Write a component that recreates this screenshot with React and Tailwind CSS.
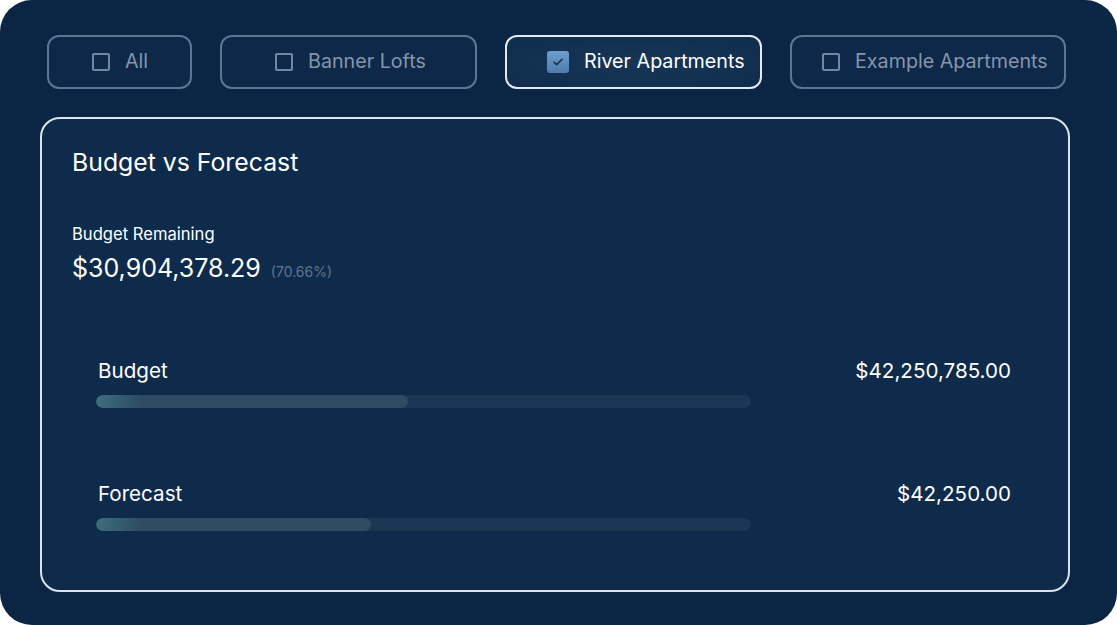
import { useState } from 'react';

const FILTERS = [
  { k: 'all', label: 'All', w: 'w-[145px]', pl: 'pl-[43px]' },
  { k: 'banner', label: 'Banner Lofts', w: 'w-[257px]', pl: 'pl-[53px]' },
  { k: 'river', label: 'River Apartments', w: 'w-[257px]', pl: 'pl-[40px]' },
  { k: 'example', label: 'Example Apartments', w: 'w-[276px]', pl: 'pl-[30px]' },
];

function Check({ on }) {
  if (on) {
    return (
      <span className="flex h-[22px] w-[22px] items-center justify-center rounded-[3px] bg-gradient-to-b from-[#6d9fcf] to-[#4d7dab]">
        <svg width="12" height="10" viewBox="0 0 12 10" fill="none">
          <path d="M2 5.2 4.6 7.6 10 2.4" stroke="#1b3553" strokeWidth="1.6" strokeLinecap="round" strokeLinejoin="round" />
        </svg>
      </span>
    );
  }
  return <span className="h-[18px] w-[18px] rounded-[2px] border-2 border-[#7587a0]" />;
}

function Bar({ pct }) {
  return (
    <div className="h-[13px] w-[655px] rounded-full bg-[#1c3754] overflow-hidden">
      <div
        className="h-full rounded-full bg-[linear-gradient(90deg,#3d6e7e_0px,#2f4b63_45px,#2f4b63_100%)]"
        style={{ width: `${pct}%` }}
      />
    </div>
  );
}

function Row({ label, value, pct }) {
  return (
    <div>
      <div className="flex items-start justify-between">
        <span className="text-[20.6px] leading-[28px] text-white pl-[2px]">{label}</span>
        <span className="text-[20.6px] leading-[28px] text-white">{value}</span>
      </div>
      <div className="mt-[10px]">
        <Bar pct={pct} />
      </div>
    </div>
  );
}

export default function App() {
  const [sel, setSel] = useState('river');
  return (
    <div className="bg-white h-[625px] w-[1117px]" style={{ fontFamily: 'Inter, "Noto Sans", sans-serif' }}>
      <div className="h-full w-full rounded-[32px] bg-[#0b2545] pt-[35px] px-[40px]">
        <div className="flex gap-[28px] pl-[7px]">
          {FILTERS.map((f) => {
            const on = sel === f.k;
            return (
              <button
                key={f.k}
                onClick={() => setSel(f.k)}
                className={`flex h-[54px] items-center gap-[15px] rounded-[12px] border-2 ${f.w} ${f.pl} ${
                  on
                    ? 'border-[#e4e9ef] bg-[radial-gradient(ellipse_at_center,#173657_0%,#0f2c4c_100%)] text-white'
                    : 'border-[#5f7590] bg-[#0d2848] text-[#8596ac]'
                }`}
              >
                <Check on={on} />
                <span className="text-[19.7px] leading-none">{f.label}</span>
              </button>
            );
          })}
        </div>

        <div className="mt-[28px] h-[475px] w-[1030px] rounded-[20px] border-2 border-[#dde3ea] bg-[#0f2b4b] px-[30px] pt-[27px]">
          <h2 className="text-[24.8px] leading-[32px] text-white">Budget vs Forecast</h2>
          <div className="mt-[44px] text-[16.6px] leading-[24px] text-white">Budget Remaining</div>
          <div className="mt-[6px] flex items-baseline gap-[10px]">
            <span className="text-[25px] leading-[32px] text-white">$30,904,378.29</span>
            <span className="text-[14px] text-[#5d7591]">(70.66%)</span>
          </div>

          <div className="mt-[73px] pl-[24px] pr-[27px]">
            <Row label="Budget" value="$42,250,785.00" pct={47.6} />
            <div className="mt-[72px]">
              <Row label="Forecast" value="$42,250.00" pct={42} />
            </div>
          </div>
        </div>
      </div>
    </div>
  );
}
